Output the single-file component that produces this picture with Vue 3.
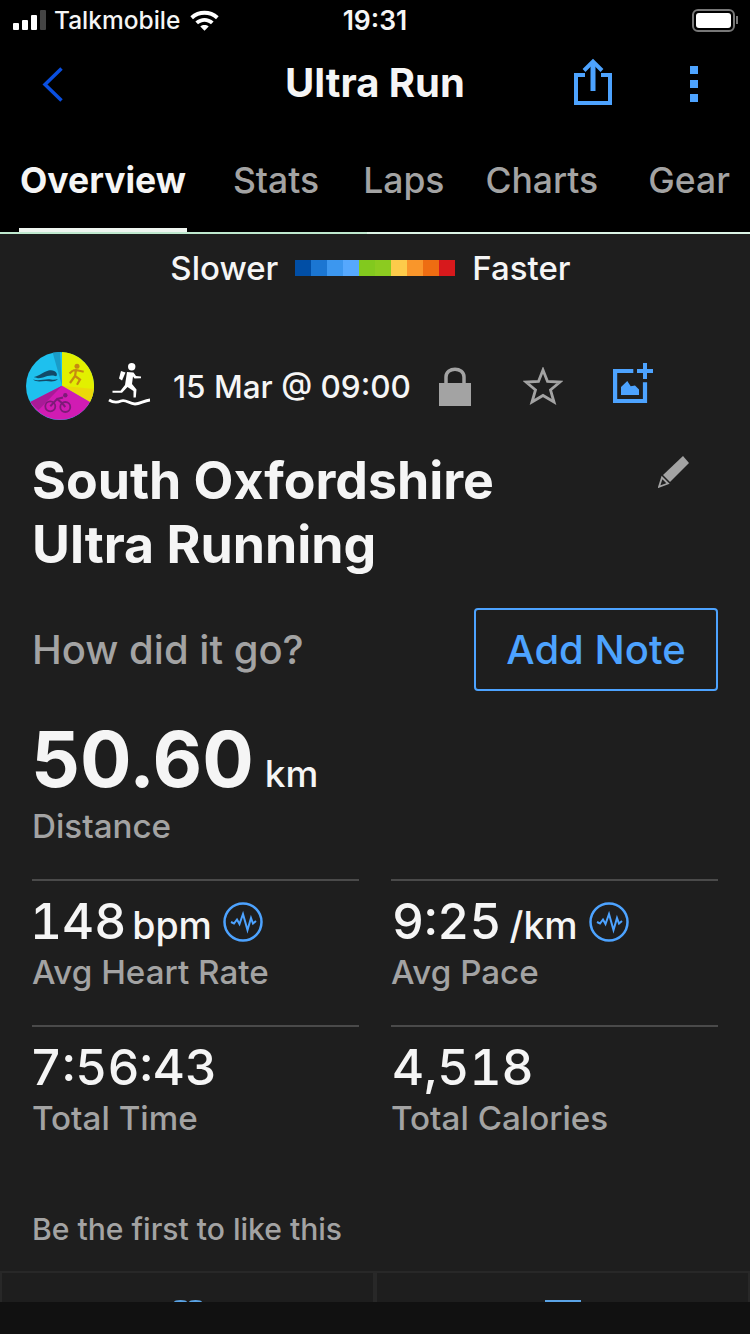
<template>
  <div class="screen">
    <div class="top-black">
      <div class="status-bar">
        <div class="status-left">
          <div class="signal">
            <i class="s1"></i><i class="s2"></i><i class="s3"></i><i class="s4"></i>
          </div>
          <span class="carrier">Talkmobile</span>
          <svg class="wifi" width="29" height="22" viewBox="1.500 0.500 27 21">
            <path d="M1.500 7.500C9 0.500 21 0.500 28.500 7.500L26 10.200C20 4.600 10 4.600 4 10.200Z" fill="#fff" />
            <path d="M6.300 12.400C11.400 7.900 18.600 7.900 23.700 12.400L21.200 15C17.500 11.800 12.500 11.800 8.800 15Z" fill="#fff" />
            <path d="M11 17.200C13.400 15.300 16.600 15.300 19 17.200L15 21.300Z" fill="#fff" />
          </svg>
        </div>
        <span class="clock">19:31</span>
        <div class="battery">
          <div class="battery-body"><div class="battery-fill"></div></div>
          <div class="battery-tip"></div>
        </div>
      </div>

      <div class="nav-bar">
        <svg class="back" width="24" height="36" viewBox="0 0 24 36">
          <path d="M20.500 1.500L4 17.500L20.500 33.500" fill="none" stroke="#0a4fe0" stroke-width="3.500" />
        </svg>
        <h1>Ultra Run</h1>
        <div class="nav-actions">
          <svg class="share" width="38" height="47" viewBox="0 0 38 47">
            <path d="M11 17H2V45H36V17H27" fill="none" stroke="#4da3ff" stroke-width="4" />
            <path d="M19 33V4" fill="none" stroke="#4da3ff" stroke-width="5" />
            <path d="M10 12.500L19 3.500L28 12.500" fill="none" stroke="#4da3ff" stroke-width="4" />
          </svg>
          <div class="dots"><i></i><i></i><i></i></div>
        </div>
      </div>

      <div class="tabs">
        <div v-for="tab in tabs" :key="tab" class="tab" :class="{ active: tab === 'Overview' }">{{ tab }}</div>
      </div>
    </div>
    <div class="map-line"></div>

    <div class="content">
      <div class="legend">
        <span>Slower</span>
        <div class="legend-bar">
          <i v-for="c in legendColors" :key="c" :style="{ background: c }"></i>
        </div>
        <span>Faster</span>
      </div>

      <div class="meta-row">
        <svg class="tri-badge" width="68" height="68" viewBox="0 0 68 68">
          <circle cx="34" cy="34" r="34" fill="#1ec0ee" />
          <path d="M36 33.700L34 0L26.700 0.800Z" fill="#1a9cc8" />
          <path d="M36 33.700L36 0A34 34 0 0 1 64 50Z" fill="#e2f000" />
          <path d="M36 33.700L67.800 37A34 34 0 0 1 64 50Z" fill="#ecd80a" />
          <path d="M36 33.700L64 50A34 34 0 0 1 4.300 50Z" fill="#d11bb3" />
          <path d="M36 33.700L4.300 50A34 34 0 0 0 12.700 58Z" fill="#a91a97" />
          <path d="M8 25C13 24 17 20 22.500 18.500C26 17.800 29 18.500 30.500 21C31.500 23.500 30.500 24.500 29 24C25 23 21 24 17 25.500C13 26.500 10 26.500 8 25Z" fill="#124a68" />
          <path d="M7 27.500C13 29.500 19 26.500 25 27.500C28 28 30 27.500 32 27C29 30 25 29.500 20 29C15 29 11 30.500 7 27.500Z" fill="#124a68" />
          <circle cx="51" cy="14.300" r="2.500" fill="#c68a10" />
          <path d="M47 18.500L50 18L57.700 19.800M50 18L49 24L44 31M49 24L54 27.500L51 32.700M47 18.500L43.500 21.500" fill="none" stroke="#c68a10" stroke-width="2.200" />
          <circle cx="24.300" cy="54.300" r="5" fill="none" stroke="#7e1a78" stroke-width="1.800" />
          <circle cx="39.300" cy="55" r="5" fill="none" stroke="#7e1a78" stroke-width="1.800" />
          <path d="M24.300 54.300L31 47L36 51L39.300 55M31 47L37 45.500" fill="none" stroke="#7e1a78" stroke-width="2" />
          <circle cx="39.300" cy="43.300" r="2.200" fill="#7e1a78" />
        </svg>

        <svg class="activity" width="44" height="46" viewBox="0 0 44 46">
          <circle cx="23.700" cy="3.800" r="3.700" fill="#fff" />
          <path d="M19 9L25.500 9.500L28 13L33 13.500V15.300L26.500 15.500L25 13.500L24 21L28.500 26.500L27.800 34.500H25.500L25.500 28L19.500 24L14 29.800H4.500V27.800H12.500L17 22Z" fill="#fff" />
          <path d="M13 8L17.500 9.500L14 17.500L11 15.500Z" fill="#fff" />
          <path d="M1 37C5 39.500 9 39.800 13 38C18 36 21 41 27 41C32 41 36 37.500 42 37" fill="none" stroke="#fff" stroke-width="2.800" />
        </svg>

        <span class="date">15 Mar @ 09:00</span>

        <svg class="lock" width="32" height="40" viewBox="0 0 32 40">
          <rect x="0" y="17" width="32" height="23" fill="#a3a3a3" />
          <path d="M7 18V11C7 0.500 25 0.500 25 11V18" fill="none" stroke="#a3a3a3" stroke-width="3.500" />
        </svg>

        <svg class="star" width="40" height="38" viewBox="0 0 40 38">
          <path d="M20 3L24.500 14.500L37 15L27.500 23L31 35L20 28.500L9 35L12.500 23L3 15L15.500 14.500Z" fill="none" stroke="#a3a3a3" stroke-width="2.800" />
        </svg>

        <svg class="add-photo" width="41" height="41" viewBox="0 0 41 41">
          <path d="M20.300 8H2.100V38H32V19.300" fill="none" stroke="#4da3ff" stroke-width="4.200" />
          <path d="M32 0V16M24 8H40" fill="none" stroke="#4da3ff" stroke-width="4" />
          <path d="M8 32V24L14.300 18L17.700 23.300L22 22.500L26 26.500V32Z" fill="#4da3ff" />
        </svg>
      </div>

      <div class="title-row">
        <h2>South Oxfordshire<br />Ultra Running</h2>
        <svg class="pencil" width="32" height="32" viewBox="0 0 32 32">
          <path d="M25 0L31 7L12 26L5 19Z" fill="#a3a3a3" />
          <path d="M4 21.500L10 27.500L1 30.800Z" fill="none" stroke="#a3a3a3" stroke-width="1.800" />
        </svg>
      </div>

      <div class="note-row">
        <span class="note-label">How did it go?</span>
        <button class="add-note">Add Note</button>
      </div>

      <div class="distance">
        <div class="distance-value"><b>50.60</b><span>km</span></div>
        <div class="stat-label distance-label">Distance</div>
      </div>

      <div class="stats-grid">
        <div v-for="stat in stats" :key="stat.label" class="stat">
          <div class="stat-value">
            <b>{{ stat.value }}</b>
            <span v-if="stat.unit" class="unit">{{ stat.unit }}</span>
            <svg v-if="stat.chart" class="pulse" width="40" height="40" viewBox="0 0 40 40">
              <circle cx="20" cy="20" r="18.500" fill="none" stroke="#4da3ff" stroke-width="2.500" />
              <path d="M8 20L11 21.500L14 17.500L16.500 22L20 12L24.500 28L28 16L30 21.500L33 19" fill="none" stroke="#4da3ff" stroke-width="2" />
            </svg>
          </div>
          <div class="stat-label">{{ stat.label }}</div>
        </div>
      </div>

      <p class="likes">Be the first to like this</p>

      <div class="social-row">
        <div class="social-cell"><i class="peek-a"></i><i class="peek-a"></i></div>
        <div class="social-cell"><i class="peek-b"></i></div>
      </div>
    </div>
    <div class="bottom-bar"></div>
  </div>
</template>

<script setup>
const tabs = ['Overview', 'Stats', 'Laps', 'Charts', 'Gear']

const legendColors = [
  '#014ea5', '#1b76d2', '#3c97ef', '#56a8fd', '#82c91e',
  '#8ccb20', '#fdcb4a', '#f9962b', '#ee6d12', '#d7191c',
]

const stats = [
  { value: '148', unit: 'bpm', label: 'Avg Heart Rate', chart: true },
  { value: '9:25', unit: '/km', label: 'Avg Pace', chart: true },
  { value: '7:56:43', label: 'Total Time' },
  { value: '4,518', label: 'Total Calories' },
]
</script>

<style>
html,
body {
  margin: 0;
  background: #1e1e1e;
}
</style>

<style scoped>
.screen {
  position: relative;
  width: 750px;
  height: 1334px;
  overflow: hidden;
  display: flex;
  flex-direction: column;
  background: #1e1e1e;
  color: #f5f5f5;
  font-family: Inter, "Liberation Sans", sans-serif;
}

.top-black {
  height: 232px;
  flex-shrink: 0;
  background: #000;
}

.status-bar {
  height: 40px;
  padding: 0 12px 0 13px;
  display: flex;
  align-items: center;
  justify-content: space-between;
  position: relative;
}

.status-left {
  display: flex;
  align-items: center;
}

.signal {
  display: flex;
  align-items: flex-end;
  gap: 3px;
  height: 20px;
}

.signal i {
  width: 6px;
  background: #fff;
  border-radius: 1px;
}

.s1 { height: 7px; }
.s2 { height: 10px; }
.s3 { height: 15px; }
.signal .s4 { height: 20px; background: #444; }

.carrier {
  margin-left: 8px;
  font-size: 24.500px;
  font-weight: 500;
}

.wifi {
  margin-left: 10px;
}

.clock {
  position: absolute;
  left: 0;
  right: 0;
  text-align: center;
  font-size: 26.500px;
  font-weight: 600;
}

.battery {
  display: flex;
  align-items: center;
  gap: 1px;
}

.battery-body {
  width: 43px;
  height: 23px;
  box-sizing: border-box;
  border: 2px solid #777;
  border-radius: 6px;
  padding: 2px;
}

.battery-fill {
  width: 100%;
  height: 100%;
  background: #fff;
  border-radius: 3px;
}

.battery-tip {
  width: 2px;
  height: 8px;
  background: #777;
}

.nav-bar {
  height: 84px;
  position: relative;
  display: flex;
  align-items: center;
  justify-content: center;
}

.nav-bar h1 {
  margin: 0;
  font-size: 40px;
  font-weight: 700;
}

.back {
  position: absolute;
  left: 41px;
  top: 27px;
}

.nav-actions {
  position: absolute;
  left: 574px;
  top: 18px;
  display: flex;
  gap: 78px;
  align-items: center;
}

.dots {
  display: flex;
  flex-direction: column;
  gap: 6px;
  margin-top: 4px;
}

.dots i {
  width: 8px;
  height: 8px;
  background: #4da3ff;
}

.tabs {
  height: 108px;
  display: flex;
  padding-left: 20px;
  box-sizing: border-box;
}

.tab {
  font-size: 35.500px;
  font-weight: 500;
  color: #a3a3a3;
  margin-right: 44px;
  padding-top: 35px;
  white-space: nowrap;
}

.tab:nth-child(1) { margin-right: 47px; }
.tab:nth-child(3) { margin-right: 41px; }
.tab:nth-child(4) { margin-right: 50px; }

.tab.active {
  color: #f5f5f5;
  font-weight: 700;
  position: relative;
}

.tab.active::after {
  content: "";
  position: absolute;
  left: -1px;
  right: -1px;
  bottom: 0;
  height: 4px;
  background: #eef4ef;
}

.map-line {
  height: 2px;
  flex-shrink: 0;
  background: linear-gradient(90deg, #bfe9cf 0, #bfe9cf 49%, #dcf5e6 49%, #dcf5e6 100%);
}

.content {
  flex: 1;
  display: flex;
  flex-direction: column;
  min-height: 0;
}

.legend {
  height: 66px;
  padding: 2px 9px 0 0;
  box-sizing: border-box;
  display: flex;
  align-items: center;
  justify-content: center;
  gap: 17px;
  font-size: 33px;
  font-weight: 500;
}

.legend-bar {
  display: flex;
}

.legend-bar i {
  width: 16px;
  height: 16px;
}

.meta-row {
  margin-top: 52px;
  height: 68px;
  padding-left: 26px;
  display: flex;
  align-items: center;
}

.activity {
  margin-left: 14px;
}

.date {
  margin-left: 21px;
  font-size: 31.500px;
  font-weight: 500;
  white-space: nowrap;
}

.lock {
  margin-left: 28px;
}

.star {
  margin-left: 52px;
}

.add-photo {
  margin-left: 50px;
  margin-top: -6px;
}

.title-row {
  margin-top: 28px;
  padding: 0 60px 0 32px;
  display: flex;
  justify-content: space-between;
  align-items: flex-start;
}

.title-row h2 {
  margin: 0;
  font-size: 51.800px;
  line-height: 64px;
  font-weight: 700;
}

.pencil {
  margin-top: 8px;
}

.note-row {
  margin-top: 32px;
  padding: 0 32px;
  display: flex;
  align-items: center;
  justify-content: space-between;
}

.note-label {
  font-size: 40px;
  font-weight: 500;
  color: #a3a3a3;
}

.add-note {
  width: 244px;
  height: 83px;
  background: transparent;
  border: 2px solid #4da3ff;
  border-radius: 4px;
  color: #4da3ff;
  font-family: inherit;
  font-size: 40px;
  font-weight: 500;
  padding: 0;
}

.distance {
  margin-top: 24px;
  padding-left: 32px;
}

.distance-value {
  display: flex;
  align-items: baseline;
}

.distance-value b {
  font-size: 76.500px;
  line-height: 88px;
  font-weight: 700;
  margin-left: -1px;
}

.distance-value span {
  margin-left: 11px;
  font-size: 37px;
  font-weight: 500;
}

.stat-label {
  font-size: 33.200px;
  line-height: 40px;
  font-weight: 500;
  color: #a3a3a3;
}

.distance-label {
  margin-top: 3px;
}

.stats-grid {
  margin-top: 33px;
  padding: 0 32px;
  display: grid;
  grid-template-columns: 327px 327px;
  column-gap: 32px;
}

.stat {
  height: 146px;
  box-sizing: border-box;
  border-top: 2px solid #4a4a4a;
  padding-top: 10px;
}

.stat-value {
  display: flex;
  align-items: baseline;
  height: 61px;
  padding-left: 1px;
}

.stat:nth-child(odd) .stat-value {
  margin-left: -3px;
}

.stat-value b {
  font-size: 49.500px;
  line-height: 60px;
  font-weight: 500;
  font-variant-numeric: tabular-nums;
}

.unit {
  margin-left: 8px;
  font-size: 37.500px;
  font-weight: 500;
}

.stat:nth-child(odd) .unit {
  margin-left: 6px;
}

.pulse {
  align-self: center;
  margin-left: 11px;
}

.likes {
  margin: 38px 0 0 32px;
  font-size: 30.100px;
  line-height: 40px;
  font-weight: 500;
  color: #a3a3a3;
}

.social-row {
  margin-top: 22px;
  height: 60px;
  box-sizing: border-box;
  border-top: 2px solid #282828;
  display: flex;
  gap: 4px;
  padding: 0 2px;
  background: #282828;
}

.social-cell {
  flex: 1;
  display: flex;
  justify-content: center;
  gap: 2px;
  padding-top: 27px;
  background: #1e1e1e;
}

.peek-a {
  width: 13px;
  height: 4px;
  border-radius: 50%;
  background: #5ba4e6;
}

.peek-b {
  width: 36px;
  height: 2px;
  background: #5ba4e6;
}

.bottom-bar {
  position: absolute;
  left: 0;
  right: 0;
  bottom: 0;
  height: 32px;
  background: #111;
}
</style>
